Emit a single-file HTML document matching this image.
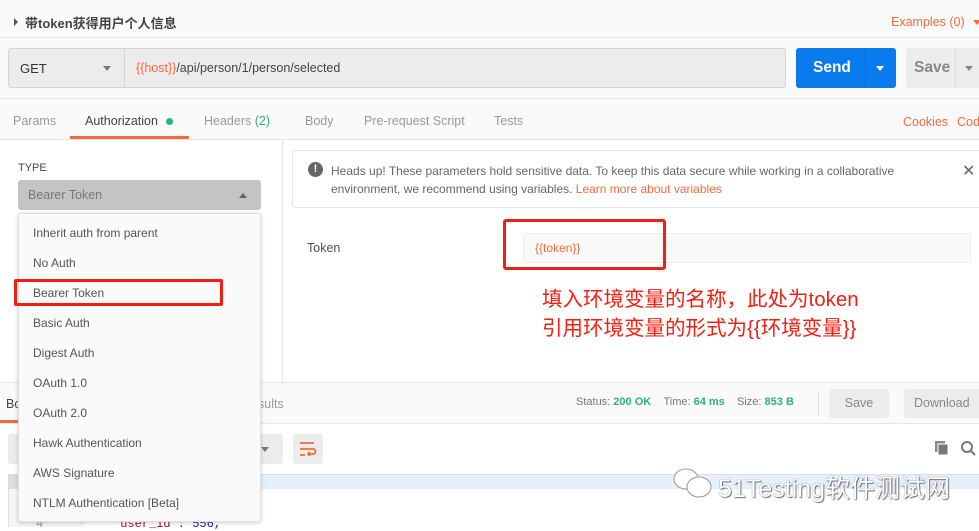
<!DOCTYPE html>
<html><head><meta charset="utf-8"><style>
*{box-sizing:border-box;margin:0;padding:0}
body{width:979px;height:527px;overflow:hidden;background:#fff;font-family:"Liberation Sans","Noto Sans CJK SC",sans-serif;font-size:12px;color:#505050;position:relative}
.a{position:absolute;white-space:nowrap}
.or{color:#f26b3a}
.gr{color:#2bb37c}
</style></head><body>
<div class="a" style="left:0;top:0;width:979px;height:98px;background:#fafafa"></div>
<div class="a" style="left:0;top:37px;width:979px;height:1px;background:#e6e6e6"></div>
<div class="a" style="left:0;top:98px;width:979px;height:42px;background:#fafafa;border-top:1px solid #e6e6e6;border-bottom:1px solid #e6e6e6"></div>
<div class="a" style="left:14px;top:18px;width:0;height:0;border-left:4px solid #555;border-top:4px solid transparent;border-bottom:4px solid transparent"></div>
<div class="a" style="left:25px;top:13px;font-size:13px;font-weight:bold;color:#444">带token获得用户个人信息</div>
<div class="a or" style="left:891px;top:15px;font-size:12.5px">Examples (0)</div>
<div class="a" style="left:973px;top:20px;border-top:5px solid #f26b3a;border-left:4px solid transparent;border-right:4px solid transparent"></div>
<!-- URL -->
<div class="a" style="left:8px;top:48px;width:778px;height:40px;background:#ececec;border:1px solid #d4d4d4;border-radius:3px"></div>
<div class="a" style="left:124px;top:49px;width:1px;height:38px;background:#d4d4d4"></div>
<div class="a" style="left:20px;top:61px;font-size:13px;color:#333">GET</div>
<div class="a" style="left:103px;top:66px;border-top:5px solid #777;border-left:4px solid transparent;border-right:4px solid transparent"></div>
<div class="a" style="left:136px;top:61px;font-size:12.5px;color:#444"><span class="or">{{host}}</span>/api/person/1/person/selected</div>
<div class="a" style="left:796px;top:48px;width:100px;height:40px;background:#097bed;border-radius:3px"></div>
<div class="a" style="left:865px;top:48px;width:1px;height:40px;background:#0a6bd0"></div>
<div class="a" style="left:813px;top:59px;font-size:15.5px;font-weight:bold;color:#fff">Send</div>
<div class="a" style="left:876px;top:66px;border-top:5px solid #fff;border-left:4px solid transparent;border-right:4px solid transparent"></div>
<div class="a" style="left:906px;top:48px;width:80px;height:40px;background:#ececec;border-radius:3px"></div>
<div class="a" style="left:955px;top:48px;width:1px;height:40px;background:#dcdcdc"></div>
<div class="a" style="left:914px;top:59px;font-size:15.5px;font-weight:bold;color:#888">Save</div>
<div class="a" style="left:965px;top:66px;border-top:5px solid #888;border-left:4px solid transparent;border-right:4px solid transparent"></div>
<!-- tabs -->
<div class="a" style="left:13px;top:114px;font-size:12.5px;color:#999">Params</div>
<div class="a" style="left:85px;top:114px;font-size:12.5px;color:#444">Authorization</div>
<div class="a" style="left:166px;top:118px;width:7px;height:7px;border-radius:50%;background:#2bb37c"></div>
<div class="a" style="left:70px;top:136px;width:119px;height:3px;background:#f26b3a"></div>
<div class="a" style="left:204px;top:114px;font-size:12.5px;color:#999">Headers <span class="gr">(2)</span></div>
<div class="a" style="left:305px;top:114px;font-size:12.5px;color:#999">Body</div>
<div class="a" style="left:364px;top:114px;font-size:12.5px;color:#999">Pre-request Script</div>
<div class="a" style="left:494px;top:114px;font-size:12.5px;color:#999">Tests</div>
<div class="a or" style="left:903px;top:115px;font-size:12.5px">Cookies</div>
<div class="a or" style="left:957px;top:115px;font-size:12.5px">Code</div>
<!-- left -->
<div class="a" style="left:282px;top:140px;width:1px;height:243px;background:#e6e6e6"></div>
<div class="a" style="left:18px;top:162px;font-size:11px;color:#444">TYPE</div>
<div class="a" style="left:18px;top:180px;width:243px;height:30px;background:#c4c4c4;border-radius:3px"></div>
<div class="a" style="left:28px;top:188px;font-size:12.5px;color:#777">Bearer Token</div>
<div class="a" style="left:239px;top:193px;border-bottom:5px solid #666;border-left:4px solid transparent;border-right:4px solid transparent"></div>
<!-- alert -->
<div class="a" style="left:292px;top:150px;width:700px;height:58px;border:1px solid #e6e6e6;border-radius:3px;background:#fff"></div>
<div class="a" style="left:308px;top:162px;width:15px;height:15px;border-radius:50%;background:#666;color:#fff;font-size:11px;font-weight:bold;text-align:center;line-height:15px">!</div>
<div class="a" style="left:331px;top:162px;font-size:12px;line-height:18px;color:#666">Heads up! These parameters hold sensitive data. To keep this data secure while working in a collaborative<br>environment, we recommend using variables. <span class="or">Learn more about variables</span></div>
<div class="a" style="left:962px;top:161px;font-size:16px;color:#666">✕</div>
<!-- token -->
<div class="a" style="left:307px;top:241px;font-size:12.5px;color:#505050">Token</div>
<div class="a" style="left:523px;top:233px;width:448px;height:30px;background:#f9f9f9;border:1px solid #ececec;border-radius:3px"></div>
<div class="a or" style="left:535px;top:241px;font-size:12px">{{token}}</div>
<div class="a" style="left:503px;top:219px;width:163px;height:51px;border:3px solid #f41e10;border-radius:3px"></div>
<div class="a" style="left:542px;top:285px;font-size:20.5px;line-height:29px;color:#f41e10">填入环境变量的名称，此处为token<br>引用环境变量的形式为{{环境变量}}</div>
<!-- response bar -->
<div class="a" style="left:0;top:382px;width:979px;height:42px;background:#fafafa;border-top:1px solid #e6e6e6;border-bottom:1px solid #e6e6e6"></div>
<div class="a" style="left:6px;top:397px;font-size:12.5px;color:#444">Bo</div>
<div class="a" style="left:0;top:420px;width:20px;height:3px;background:#f26b3a"></div>
<div class="a" style="left:258px;top:397px;font-size:12.5px;color:#999">sults</div>
<div class="a" style="left:576px;top:396px;font-size:11px;color:#777">Status: <b class="gr">200 OK</b>&nbsp;&nbsp;&nbsp;&nbsp;Time: <b class="gr">64 ms</b>&nbsp;&nbsp;&nbsp;&nbsp;Size: <b class="gr">853 B</b></div>
<div class="a" style="left:818px;top:391px;width:1px;height:24px;background:#ddd"></div>
<div class="a" style="left:829px;top:389px;width:60px;height:29px;background:#ececec;border-radius:3px;text-align:center;line-height:29px;font-size:12.5px;color:#888">Save</div>
<div class="a" style="left:904px;top:389px;width:80px;height:29px;background:#ececec;border-radius:3px;padding-left:10px;line-height:29px;font-size:12.5px;color:#888">Download</div>
<!-- toolbar -->
<div class="a" style="left:8px;top:434px;width:275px;height:30px;background:#ececec;border-radius:3px"></div>
<div class="a" style="left:261px;top:447px;border-top:5px solid #777;border-left:4px solid transparent;border-right:4px solid transparent"></div>
<div class="a" style="left:293px;top:434px;width:30px;height:30px;background:#ececec;border-radius:3px"></div>
<svg class="a" style="left:299px;top:440px" width="18" height="18" viewBox="0 0 18 18"><path d="M1 3H15M1 9H14a2.5 2.5 0 0 1 0 5H9M1 15H6M11 12l-2 2 2 2" stroke="#f26b3a" stroke-width="1.8" fill="none"/></svg>
<svg class="a" style="left:935px;top:441px" width="14" height="15"><rect x="0" y="0" width="10" height="11" fill="#888"/><rect x="3" y="3" width="10" height="11" fill="#777" stroke="#fff" stroke-width="1"/></svg>
<svg class="a" style="left:960px;top:440px" width="16" height="17"><circle cx="7" cy="7" r="5" stroke="#777" stroke-width="2" fill="none"/><path d="M11 11l4 4" stroke="#777" stroke-width="2"/></svg>
<!-- code -->
<div class="a" style="left:8px;top:474px;width:971px;height:53px;border:1px solid #ddd;border-right:none;border-bottom:none"></div>
<div class="a" style="left:9px;top:475px;width:970px;height:14px;background:#e6f0fb"></div>
<div class="a" style="left:9px;top:475px;width:75px;height:52px;background:#f5f5f5"></div>
<div class="a" style="left:9px;top:475px;width:75px;height:14px;background:#ddd"></div>
<div class="a" style="left:36px;top:517px;font-family:'Liberation Mono',monospace;font-size:12px;color:#999">4</div>
<div class="a" style="left:113px;top:517px;font-family:'Liberation Mono',monospace;font-size:12px;color:#a31515">"user_id": <span style="color:#1a1aa6">556</span>,</div>
<!-- watermark -->
<svg class="a" style="left:672px;top:465px" width="42" height="36"><ellipse cx="14" cy="14" rx="12" ry="10" fill="#fff" stroke="#999"/><ellipse cx="27" cy="22" rx="12" ry="10" fill="#fff" stroke="#999"/></svg>
<div class="a" style="left:718px;top:469px;font-size:25px;color:#fff;text-shadow:0 0 1px #555,1px 1px 1px #777">51Testing软件测试网</div>
<!-- dropdown -->
<div class="a" style="left:18px;top:213px;width:243px;height:309px;background:#fafafa;border:1px solid #e0e0e0;border-radius:3px;box-shadow:0 1px 4px rgba(0,0,0,.2)"></div>
<div class="a" style="left:33px;top:218px;font-size:12px;line-height:30px;color:#555">Inherit auth from parent<br>No Auth<br>Bearer Token<br>Basic Auth<br>Digest Auth<br>OAuth 1.0<br>OAuth 2.0<br>Hawk Authentication<br>AWS Signature<br>NTLM Authentication [Beta]</div>
<div class="a" style="left:14px;top:279px;width:209px;height:27px;border:3px solid #f41e10;border-radius:2px"></div>
</body></html>
